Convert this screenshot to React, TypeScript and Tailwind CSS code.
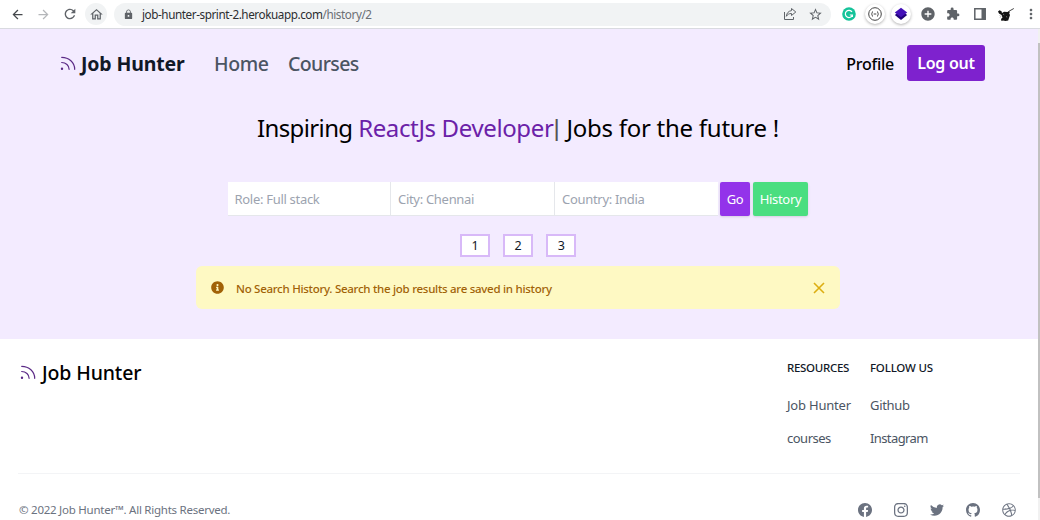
import type { ReactNode } from "react";
import {
  MdArrowBack,
  MdArrowForward,
  MdRefresh,
  MdOutlineHome,
  MdLock,
  MdStarBorder,
  MdExtension,
  MdMoreVert,
  MdAddCircle,
} from "react-icons/md";
import { FaInstagram, FaDribbble } from "react-icons/fa";

function RssIcon() {
  return (
    <svg viewBox="0 0 16 16" className="size-4 shrink-0" fill="none" stroke="#5b2a86" strokeWidth="1.2" strokeLinecap="round">
      <path d="M1.700 1.300c7.200 0 13 5.200 13 12M1.700 6.500c4.200 0 7.400 3 7.400 6.800" />
      <circle cx="2" cy="12.800" r="0.600" fill="#5b2a86" />
    </svg>
  );
}

function ShareIcon() {
  return (
    <svg viewBox="0 0 14 14" className="-ml-px mr-px size-3.5" fill="none" stroke="#5f6368" strokeWidth="1">
      <path d="M1.500 5v7.500h9V10" />
      <path d="M8.500 1.500 12.800 5 8.500 8.500V6.500C6 6.500 4.500 7.400 3.300 9.300 3.600 6.200 5.500 4 8.500 3.600z" strokeLinejoin="round" />
    </svg>
  );
}

function BrowserBar() {
  return (
    <header className="flex h-[29px] shrink-0 items-center border-b border-[#d9dae0] bg-white text-[#5f6368]">
      <MdArrowBack className="ml-[10px] size-[15px] text-[#45484c]" />
      <MdArrowForward className="ml-[11px] size-[15px] text-[#b5b7ba]" />
      <MdRefresh className="ml-[11px] size-[16px]" />
      <span className="ml-[7px] flex size-[22px] items-center justify-center rounded-full bg-[#f1f3f4]">
        <MdOutlineHome className="size-[15px]" />
      </span>
      <div className="ml-[7px] flex h-[23px] w-[717px] items-center rounded-full bg-[#f1f3f4]">
        <MdLock className="ml-[9px] size-[11px]" />
        <p className="ml-[8px] w-[642px] whitespace-nowrap text-[11.700px] leading-5 tracking-[-0.42px] text-[#2c2e31]">
          job-hunter-sprint-2.herokuapp.com<span className="text-[#6b6f74]">/history/2</span>
        </p>
        <ShareIcon />
        <MdStarBorder className="ml-[10px] size-[15px]" />
      </div>
      <svg viewBox="0 0 14 14" className="ml-[11px] size-[14px]">
        <circle cx="7" cy="7" r="6.800" fill="#15c39a" />
        <path d="M10 5A3.600 3.600 0 1 0 10.400 8H7.800M10.400 7.500v2.600" fill="none" stroke="#fff" strokeWidth="1.200" />
      </svg>
      <span className="ml-[9px] flex size-[20px] items-center justify-center rounded-full bg-white shadow-[0_1px_3px_rgba(0,0,0,0.3)]">
        <svg viewBox="0 0 14 14" className="size-[14px]" fill="none" stroke="#444" strokeWidth="1">
          <circle cx="7" cy="7" r="6.300" />
          <path d="M5 4.500C3.700 4.500 4.700 6.800 3.500 7c1.200.2.200 2.500 1.500 2.500M9 4.500c1.300 0 .3 2.300 1.500 2.500-1.200.2-.2 2.500-1.500 2.500M5.700 7h2.600" />
        </svg>
      </span>
      <span className="ml-[6px] flex size-[20px] items-center justify-center rounded-full bg-white shadow-[0_1px_3px_rgba(0,0,0,0.3)]">
        <svg viewBox="0 0 14 14" className="size-[14px]">
          <path d="M7 3.500 13.200 8 7 13 .8 8z" fill="#21037a" />
          <path d="M7 .8 13.200 5.500 7 10.200.8 5.500z" fill="#4310b8" />
        </svg>
      </span>
      <MdAddCircle className="ml-[9px] size-[16px]" />
      <MdExtension className="ml-[10px] size-[14px]" />
      <svg viewBox="0 0 12 12" className="ml-[14px] size-[12px]">
        <path d="M.8.800h10.400v10.400H.8z" fill="none" stroke="#5f6368" strokeWidth="1.500" />
        <path d="M7.500 1h4v10h-4z" fill="#5f6368" />
      </svg>
      <svg viewBox="0 0 16 14" className="ml-[12px] h-[14px] w-[16px]">
        <path d="M0 4.500 1.500 3.200l2 1L4 6l2-1.200 3.500.2 1.500-1 .8 1-.6 1.500.8 1.500-1 3-.8 2.500L7.500 14 5 13.500 3.500 14 3 12l1.500-1.500L3.500 8 1 6.500z" fill="#111" />
        <path d="M10.500 4.500 15.800 1.500" stroke="#444" strokeWidth="1" />
        <path d="M1.500 8.500 3 9.500l-1 1.200M5 7l1.200.8M8 9.500l1.200.6" stroke="#999" strokeWidth=".7" fill="none" />
      </svg>
      <MdMoreVert className="ml-[9px] size-[16px]" />
    </header>
  );
}

function SearchField({ label, last }: { label: string; last?: boolean }) {
  return (
    <div
      className={
        last
          ? "flex w-[163px] items-center border-b border-[#e5e7eb] bg-white pt-[2px] pl-[7px] text-[13px] tracking-[-0.3px] text-[#9ca3af]"
          : "flex w-[164px] items-center border-r border-b border-[#e5e7eb] bg-white pt-[2px] pl-[7px] text-[13px] tracking-[-0.3px] text-[#9ca3af] first:w-[163px] first:pl-[6.500px]"
      }
    >
      {label}
    </div>
  );
}

function Pager({ children }: { children: ReactNode }) {
  return (
    <span className="flex h-[23px] w-[30px] items-center justify-center border-2 border-[#d8b9f8] bg-white pt-px text-[12.500px] text-[#111827]">
      {children}
    </span>
  );
}

function Hero() {
  return (
    <main className="h-[310px] shrink-0 bg-[#f3ebff]">
      <nav className="flex h-[70px] items-center whitespace-nowrap pl-[60px] text-[19.500px]">
        <RssIcon />
        <span className="ml-[5px] w-[133px] font-bold tracking-[-0.15px] text-[#111827]">Job Hunter</span>
        <span className="w-[74px] font-medium tracking-[-0.4px] text-[#4b5563]">Home</span>
        <span className="font-medium tracking-[-0.6px] text-[#4b5563]">Courses</span>
        <span className="ml-auto pb-[1px] text-[16px] font-medium tracking-[-0.25px] text-black">Profile</span>
        <button className="mr-[53px] mb-[3px] ml-[13px] h-[36px] w-[78px] rounded-[3px] bg-[#7e22ce] pt-px text-[16px] font-semibold tracking-[-0.3px] text-white">
          Log out
        </button>
      </nav>
      <h1 className="mt-[13px] flex h-[32px] items-center justify-center whitespace-pre pr-[2px] text-[24px] text-black">
        <span className="tracking-[-0.62px]">Inspiring </span>
        <span className="tracking-[-0.37px] text-[#6b21a8]">ReactJs Developer</span>
        <span className="w-[7px] font-['Liberation_Sans',sans-serif] text-[#555]">|</span>
        <span className="tracking-[-0.26px]"> Jobs for the future !</span>
      </h1>
      <form className="mt-[38px] ml-[228px] flex h-[34px] text-[13px]">
        <SearchField label="Role: Full stack" />
        <SearchField label="City: Chennai" />
        <SearchField label="Country: India" last />
        <button type="button" className="ml-[2px] w-[30px] rounded-[2px] bg-[#9333ea] pt-[2px] tracking-[-0.5px] text-white shadow-sm">Go</button>
        <button type="button" className="ml-[3px] w-[55px] rounded-[2px] bg-[#4ade80] pt-[2px] tracking-[-0.3px] text-white shadow-sm">History</button>
      </form>
      <div className="mt-[18px] ml-[460px] flex gap-[13.200px]">
        <Pager>1</Pager>
        <Pager>2</Pager>
        <Pager>3</Pager>
      </div>
      <div className="mt-[9px] ml-[196px] flex h-[43px] w-[644px] items-center rounded-md bg-[#fef9c3] text-[#a16207]">
        <svg viewBox="0 0 512 512" className="ml-[15px] size-[13px] fill-[#a16207]">
          <path d="M256 8C119 8 8 119 8 256s111 248 248 248 248-111 248-248S393 8 256 8zm0 110a42 42 0 1 1 0 84 42 42 0 0 1 0-84zm56 254c0 7-5 12-12 12h-88c-7 0-12-5-12-12v-24c0-7 5-12 12-12h12v-64h-12c-7 0-12-5-12-12v-24c0-7 5-12 12-12h64c7 0 12 5 12 12v100h12c7 0 12 5 12 12z" />
        </svg>
        <p className="ml-[12px] pt-[2px] text-[11.500px] font-medium tracking-[-0.28px]">No Search History. Search the job results are saved in history</p>
        <svg viewBox="0 0 12 12" className="mr-[15px] ml-auto size-3" stroke="#dcae12" strokeWidth="1.600">
          <path d="m1 1 10 10M11 1 1 11" />
        </svg>
      </div>
    </main>
  );
}

function SocialIcon({ d }: { d: string }) {
  return (
    <svg viewBox="2 2 20 20" className="size-[14px]" fill="currentColor">
      <path d={d} />
    </svg>
  );
}

function Footer() {
  return (
    <footer className="flex grow flex-col bg-white pr-[18px] pl-[18px]">
      <div className="flex h-[135px] border-b border-[#f3f4f6] whitespace-nowrap">
        <div className="mt-[18px] ml-[2px] flex h-[32px] items-center">
          <RssIcon />
          <span className="ml-[6px] text-[19.500px] font-medium tracking-[-0.13px] text-black">Job Hunter</span>
        </div>
        <div className="ml-auto w-[83px] text-[13px] text-[#4b5563]">
          <h2 className="mt-[19px] h-[20px] text-[11.500px] leading-5 font-medium tracking-[-0.3px] text-[#111827]">RESOURCES</h2>
          <p className="mt-[17px] h-[20px] leading-5 tracking-[-0.2px]">Job Hunter</p>
          <p className="mt-[13px] h-[20px] leading-5 tracking-[-0.5px]">courses</p>
        </div>
        <div className="w-[150px] text-[13px] text-[#4b5563]">
          <h2 className="mt-[19px] h-[20px] text-[11.500px] leading-5 font-medium tracking-[-0.2px] text-[#111827]">FOLLOW US</h2>
          <p className="mt-[17px] h-[20px] leading-5 tracking-[-0.3px]">Github</p>
          <p className="mt-[13px] h-[20px] leading-5 tracking-[-0.6px]">Instagram</p>
        </div>
      </div>
      <div className="mt-[26px] flex h-[20px] items-center gap-[22px] pr-[4px] text-[#6b7280]">
        <p className="mr-auto ml-[1px] text-[11.500px] tracking-[-0.25px]">© 2022 Job Hunter™. All Rights Reserved.</p>
        <SocialIcon d="M22 12c0-5.523-4.477-10-10-10S2 6.477 2 12c0 4.991 3.657 9.128 8.438 9.878v-6.987h-2.540V12h2.540V9.797c0-2.506 1.492-3.890 3.777-3.890 1.094 0 2.238.195 2.238.195v2.460h-1.260c-1.243 0-1.630.771-1.630 1.562V12h2.773l-.443 2.890h-2.330v6.988C18.343 21.128 22 16.991 22 12z" />
        <FaInstagram className="size-[16px] -mx-px" />
        <SocialIcon d="M8.290 20.251c7.547 0 11.675-6.253 11.675-11.675 0-.178 0-.355-.012-.530A8.348 8.348 0 0022 5.920a8.190 8.190 0 01-2.357.646 4.118 4.118 0 001.804-2.270 8.224 8.224 0 01-2.605.996 4.107 4.107 0 00-6.993 3.743 11.650 11.650 0 01-8.457-4.287 4.106 4.106 0 001.270 5.477A4.072 4.072 0 012.800 9.713v.052a4.105 4.105 0 003.292 4.022 4.095 4.095 0 01-1.853.070 4.108 4.108 0 003.834 2.850A8.233 8.233 0 012 18.407a11.616 11.616 0 006.290 1.840" />
        <SocialIcon d="M12 2C6.477 2 2 6.484 2 12.017c0 4.425 2.865 8.180 6.839 9.504.5.092.682-.217.682-.483 0-.237-.008-.868-.013-1.703-2.782.605-3.369-1.343-3.369-1.343-.454-1.158-1.110-1.466-1.110-1.466-.908-.620.069-.608.069-.608 1.003.070 1.531 1.032 1.531 1.032.892 1.530 2.341 1.088 2.910.832.092-.647.350-1.088.636-1.338-2.220-.253-4.555-1.113-4.555-4.951 0-1.093.390-1.988 1.029-2.688-.103-.253-.446-1.272.098-2.650 0 0 .840-.270 2.750 1.026A9.564 9.564 0 0112 6.844c.850.004 1.705.115 2.504.337 1.909-1.296 2.747-1.027 2.747-1.027.546 1.379.202 2.398.100 2.651.640.700 1.028 1.595 1.028 2.688 0 3.848-2.339 4.695-4.566 4.943.359.309.678.920.678 1.855 0 1.338-.012 2.419-.012 2.747 0 .268.180.580.688.482A10.019 10.019 0 0022 12.017C22 6.484 17.522 2 12 2z" />
        <FaDribbble className="size-[14px]" />
      </div>
    </footer>
  );
}

export default function App() {
  return (
    <div className="flex h-[520px] w-[1040px] flex-col overflow-hidden bg-white font-['Noto_Sans','Open_Sans',sans-serif]">
      <BrowserBar />
      <div className="flex grow">
        <div className="flex w-[1038px] shrink-0 flex-col">
          <Hero />
          <Footer />
        </div>
        <div className="w-[2px] bg-[#f1f1f1] pt-[14px]">
          <div className="h-[455px] bg-[#c1c1c1]" />
        </div>
      </div>
    </div>
  );
}
